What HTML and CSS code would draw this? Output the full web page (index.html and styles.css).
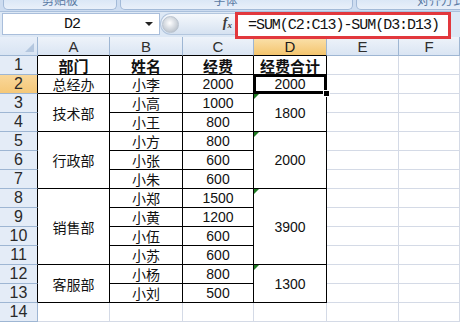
FILE: index.html
```html
<!DOCTYPE html>
<html lang="zh-CN">
<head>
<meta charset="utf-8">
<link rel="stylesheet" href="styles.css">
</head>
<body>
<div class="app">
  <div class="ribbon">
    <div class="group g1"><span class="glabel">剪贴板</span></div>
    <div class="group g2"><span class="glabel">字体</span></div>
    <div class="group g3"><span class="glabel">对齐方式</span></div>
  </div>
  <div class="fbar">
    <div class="namebox"><span class="nbtext">D2</span><span class="nbarrow"></span></div>
    <div class="fxpill"><span class="knob"></span><span class="fx">f<sub>x</sub></span></div>
    <div class="formula">=SUM(C2:C13)-SUM(D3:D13)</div>
  </div>
  <div class="sheet">
    <div class="corner"></div>
    <div class="ch tb">A</div><div class="ch tb">B</div><div class="ch tb">C</div><div class="ch tb sel">D</div><div class="ch">E</div><div class="ch">F</div>

    <div class="rh tl">1</div><div class="c t b">部门</div><div class="c t b">姓名</div><div class="c t b">经费</div><div class="c t b">经费合计</div><div class="c"></div><div class="c"></div>

    <div class="rh tl sel">2</div><div class="c t">总经办</div><div class="c t">小李</div><div class="c t n">2000</div><div class="c t n active">2000</div><div class="c"></div><div class="c"></div>

    <div class="rh tl">3</div><div class="c t rs2">技术部</div><div class="c t">小高</div><div class="c t n">1000</div><div class="c t n rs2 tri">1800</div><div class="c"></div><div class="c"></div>
    <div class="rh tl">4</div><div class="c t">小王</div><div class="c t n">800</div><div class="c"></div><div class="c"></div>

    <div class="rh tl">5</div><div class="c t rs3">行政部</div><div class="c t">小方</div><div class="c t n">800</div><div class="c t n rs3 tri">2000</div><div class="c"></div><div class="c"></div>
    <div class="rh tl">6</div><div class="c t">小张</div><div class="c t n">600</div><div class="c"></div><div class="c"></div>
    <div class="rh tl">7</div><div class="c t">小朱</div><div class="c t n">600</div><div class="c"></div><div class="c"></div>

    <div class="rh tl">8</div><div class="c t rs4">销售部</div><div class="c t">小郑</div><div class="c t n">1500</div><div class="c t n rs4 tri">3900</div><div class="c"></div><div class="c"></div>
    <div class="rh tl">9</div><div class="c t">小黄</div><div class="c t n">1200</div><div class="c"></div><div class="c"></div>
    <div class="rh tl">10</div><div class="c t">小伍</div><div class="c t n">600</div><div class="c"></div><div class="c"></div>
    <div class="rh tl">11</div><div class="c t">小苏</div><div class="c t n">600</div><div class="c"></div><div class="c"></div>

    <div class="rh tl">12</div><div class="c t rs2">客服部</div><div class="c t">小杨</div><div class="c t n">800</div><div class="c t n rs2 tri">1300</div><div class="c"></div><div class="c"></div>
    <div class="rh tl">13</div><div class="c t">小刘</div><div class="c t n">500</div><div class="c"></div><div class="c"></div>

    <div class="rh">14</div><div class="c"></div><div class="c"></div><div class="c"></div><div class="c"></div><div class="c"></div><div class="c"></div>
  </div>
</div>
</body>
</html>
```
FILE: styles.css
```css
html, body {
  margin: 0;
  padding: 0;
  background: #ffffff;
}
.app {
  width: 460px;
  height: 322px;
  overflow: hidden;
  font-family: "Liberation Sans", Arial, sans-serif;
}
.ribbon {
  height: 12px;
  display: flex;
  gap: 3px;
  padding-left: 3px;
  background: #cddcf0;
  overflow: hidden;
  box-sizing: border-box;
  border-bottom: 1px solid #aac0dc;
}
.group {
  height: 10px;
  background: linear-gradient(#dbe7f6, #e9f0fa);
  border: 1px solid #a3bad8;
  border-top: none;
  border-radius: 0 0 5px 5px;
  display: flex;
  justify-content: center;
  overflow: hidden;
  box-sizing: border-box;
}
.g1 { width: 114px; }
.g2 { width: 233px; padding-right: 22px; }
.g3 { flex: 1; justify-content: flex-end; margin-right: -6px; }
.glabel {
  font-family: "Noto Sans CJK SC", sans-serif;
  font-size: 12px;
  line-height: 12px;
  margin-top: -6px;
  color: #5a7aa3;
  white-space: nowrap;
}
.fbar {
  height: 25px;
  display: flex;
  align-items: flex-start;
  background: #dde8f5;
}
.namebox {
  width: 158px;
  height: 22px;
  margin: 1px 0 0 2px;
  background: #ffffff;
  border: 1px solid #a9bedb;
  box-sizing: border-box;
  display: flex;
  align-items: center;
  padding-right: 6px;
}
.nbtext {
  flex: 1;
  text-align: center;
  font-family: "Liberation Mono", monospace;
  font-size: 15px;
  letter-spacing: -1px;
  color: #111;
  padding-right: 4px;
}
.nbarrow {
  width: 0;
  height: 0;
  border-left: 4px solid transparent;
  border-right: 4px solid transparent;
  border-top: 4px solid #222;
}
.fxpill {
  width: 75px;
  height: 22px;
  margin-top: 1px;
  box-sizing: border-box;
  background: linear-gradient(#f5f8fc, #d6e2f1);
  border: 1px solid #b3c6de;
  border-right: none;
  border-radius: 11px 0 0 11px;
  display: flex;
  align-items: center;
  justify-content: space-between;
  padding: 0 3px 0 1px;
}
.knob {
  width: 17px;
  height: 17px;
  border-radius: 50%;
  background: radial-gradient(circle at 45% 40%, #ffffff 0, #dfe3e8 35%, #a9b2bd 100%);
  border: 1px solid #b9c3cf;
  box-sizing: border-box;
}
.fx {
  font-family: "Liberation Serif", serif;
  font-style: italic;
  font-weight: bold;
  font-size: 14px;
  color: #3b3b3b;
  line-height: 14px;
}
.fx sub {
  font-size: 9px;
  vertical-align: -1px;
}
.formula {
  flex: 1;
  height: 27px;
  margin: 0 9px -3px 0;
  box-sizing: border-box;
  border: 3px solid #e2383d;
  background: #ffffff;
  position: relative;
  z-index: 2;
  display: flex;
  align-items: center;
  padding-left: 10px;
  font-family: "Liberation Mono", monospace;
  font-size: 15px;
  letter-spacing: -1.05px;
  color: #111;
}
.sheet {
  display: grid;
  grid-template-columns: 38px 72px 73px 71px 73px 72px 61px;
  grid-auto-rows: 19px;
}
.sheet > div {
  box-sizing: border-box;
  display: flex;
  align-items: center;
  justify-content: center;
  overflow: hidden;
}
.corner {
  background: linear-gradient(#e8eff9, #d8e4f3);
  border-right: 1px solid #9eb6d3;
  border-bottom: 1px solid #9eb6d3;
  position: relative;
}
.corner::after {
  content: "";
  position: absolute;
  right: 3px;
  bottom: 3px;
  border-left: 9px solid transparent;
  border-bottom: 9px solid #b4c7df;
}
.ch {
  background: linear-gradient(#eef3fa, #dae5f3);
  border-right: 1px solid #9eb6d3;
  border-bottom: 1px solid #9eb6d3;
  font-size: 15px;
  color: #2e2e2e;
}
.ch.tb { border-bottom-color: #000; }
.ch.sel {
  background: linear-gradient(#fbe2ae, #f4c56e);
  color: #1a1a1a;
}
.rh {
  background: #e4ecf7;
  border-right: 1px solid #9eb6d3;
  border-bottom: 1px solid #9eb6d3;
  font-size: 16px;
  color: #2a2a2a;
}
.rh.tl { border-right-color: #000; }
.rh.sel {
  background: linear-gradient(#f9d79a, #f5c878);
}
.c {
  border-right: 1px solid #d4dae6;
  border-bottom: 1px solid #d4dae6;
  font-family: "Noto Sans CJK SC", sans-serif;
  font-size: 14px;
  color: #111;
  position: relative;
}
.c.t {
  border-right-color: #000;
  border-bottom-color: #000;
}
.c.b {
  font-weight: bold;
  font-size: 15px;
}
.c.n {
  font-family: "Liberation Sans", Arial, sans-serif;
  font-size: 14px;
}
.rs2 { grid-row: span 2; }
.rs3 { grid-row: span 3; }
.rs4 { grid-row: span 4; }
.tri::before {
  content: "";
  position: absolute;
  left: 0;
  top: 0;
  border-top: 5px solid #1f7a22;
  border-right: 5px solid transparent;
}
.active {
  box-shadow: inset 0 0 0 2px #000, -1px -1px 0 0 #000;
  overflow: visible !important;
  z-index: 3;
}
.active::after {
  content: "";
  position: absolute;
  right: -4px;
  bottom: -4px;
  width: 5px;
  height: 5px;
  background: #000;
  border: 1px solid #fff;
}
```
